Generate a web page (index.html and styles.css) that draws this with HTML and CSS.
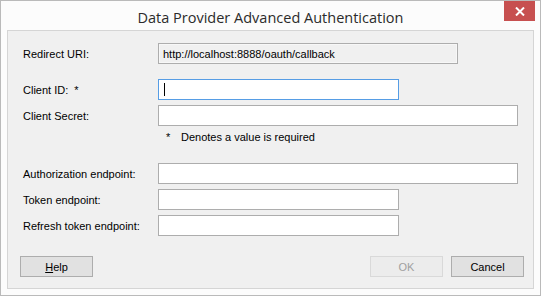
FILE: index.html
```html
<!DOCTYPE html>
<html>
<head>
<meta charset="utf-8">
<link rel="stylesheet" href="styles.css">
</head>
<body>
<div class="window">
  <div class="titlebar">
    <div class="title">Data Provider Advanced Authentication</div>
    <div class="close">
      <svg width="10" height="9" viewBox="0 0 10 9"><path d="M1 0.5 L9 8.5 M9 0.5 L1 8.5" stroke="#fff" stroke-width="2" fill="none"/></svg>
    </div>
  </div>
  <div class="panel">
    <div class="form group-first">
      <div class="label">Redirect URI:</div>
      <div class="field readonly wide-mid">http://localhost:8888/oauth/callback</div>
    </div>
    <div class="form group">
      <div class="label">Client ID:&nbsp; *</div>
      <div class="field focused short"><span class="caret"></span></div>
      <div class="label">Client Secret:</div>
      <div class="field wide"></div>
    </div>
    <div class="note"><span class="star">*</span><span>Denotes a value is required</span></div>
    <div class="form group-last">
      <div class="label">Authorization endpoint:</div>
      <div class="field wide"></div>
      <div class="label">Token endpoint:</div>
      <div class="field short"></div>
      <div class="label">Refresh token endpoint:</div>
      <div class="field short"></div>
    </div>
    <div class="buttons">
      <button class="btn"><span class="u">H</span>elp</button>
      <div class="spacer"></div>
      <button class="btn disabled">OK</button>
      <button class="btn">Cancel</button>
    </div>
  </div>
</div>
</body>
</html>
```
FILE: styles.css
```css
* { box-sizing: border-box; }
html, body { margin: 0; padding: 0; background: #fcfcfc; }
body { font-family: "Liberation Sans", Arial, sans-serif; font-size: 11px; color: #000; }

.window {
  width: 541px;
  height: 296px;
  border: 1px solid #bababa;
  background: #fcfcfc;
  padding: 0 6px 6px 6px;
  display: flex;
  flex-direction: column;
}

.titlebar {
  position: relative;
  height: 29px;
  display: flex;
  align-items: center;
  justify-content: center;
}
.title {
  font-family: "Open Sans", "Noto Sans", sans-serif;
  font-size: 14.5px;
  color: #2b2b2b;
  margin-top: 3px;
}
.close {
  position: absolute;
  right: -1px;
  top: 0;
  width: 31px;
  height: 20px;
  background: #c75050;
  display: flex;
  align-items: center;
  justify-content: center;
}

.panel {
  flex: 1;
  border: 1px solid #d5d5d5;
  background: #f0f0f0;
  padding: 12px 9px 11px 12px;
  display: flex;
  flex-direction: column;
}

.form {
  display: grid;
  grid-template-columns: 138px 1fr;
  grid-auto-rows: 21px;
  row-gap: 5px;
  align-items: center;
}
.group { margin-top: 15px; }

.label { padding-left: 3px; white-space: nowrap; }

.field {
  height: 21px;
  border: 1px solid #adadad;
  background: #fff;
  display: flex;
  align-items: center;
  padding-left: 4px;
}
.field.readonly { background: #f0f0f0; box-shadow: inset 0 0 0 1px #f7f7f7; }
.field.focused { border-color: #569de5; }
.wide { width: 360px; }
.wide-mid { width: 300px; }
.short { width: 241px; }

.caret {
  display: block;
  width: 1px;
  height: 13px;
  background: #000;
  margin-left: 1px;
}

.note {
  height: 37px;
  display: flex;
  align-items: flex-start;
  padding-top: 5px;
  padding-left: 146px;
}
.star { width: 15px; }

.buttons {
  margin-top: auto;
  display: flex;
  gap: 8px;
}
.spacer { flex: 1; }
.btn {
  width: 73px;
  height: 21px;
  border: 1px solid #adadad;
  background: #e1e1e1;
  font-family: "Liberation Sans", Arial, sans-serif;
  font-size: 11px;
  color: #000;
  padding: 0;
  margin: 0;
}
.btn .u { text-decoration: underline; }
.btn.disabled { border-color: #d9d9d9; background: #ececec; color: #a0a0a0; }
```
